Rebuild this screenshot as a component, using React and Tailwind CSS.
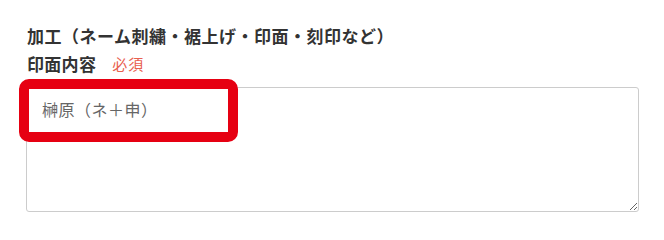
import React from "react";

const App = () => {
  return (
    <div
      className="w-[664px] h-[232px] bg-white relative"
      style={{ fontFamily: '"Noto Sans CJK JP", "Noto Sans", sans-serif' }}
    >
      <div className="pl-[27px] pr-[25px] pt-[24px]">
        {/* section title */}
        <h2 className="text-[17px] leading-[24px] font-bold text-[#333] tracking-[0.5px]">
          加工（ネーム刺繍・裾上げ・印面・刻印など）
        </h2>
        <div className="flex items-center gap-[16px] mt-[4px]">
          <span className="text-[17px] leading-[24px] font-bold text-[#333] tracking-[0.3px]">印面内容</span>
          <span className="text-[15px] leading-[24px] text-[#e8604f] tracking-[1px]">必須</span>
        </div>
        <textarea
          className="mt-[11px] -ml-[1px] block w-[613px] h-[125px] border border-[#cccccc] rounded-[3px] px-[15px] py-[9px] text-[16px] leading-[24px] text-[#333] placeholder:text-[#666] tracking-[0.5px] resize-y"
          placeholder="榊原（ネ＋申）"
        />
      </div>
      {/* highlight box */}
      <div className="absolute left-[19px] top-[79px] w-[219px] h-[63px] border-[10px] border-[#e60012] rounded-[10px] pointer-events-none" />
    </div>
  );
};

export default App;
